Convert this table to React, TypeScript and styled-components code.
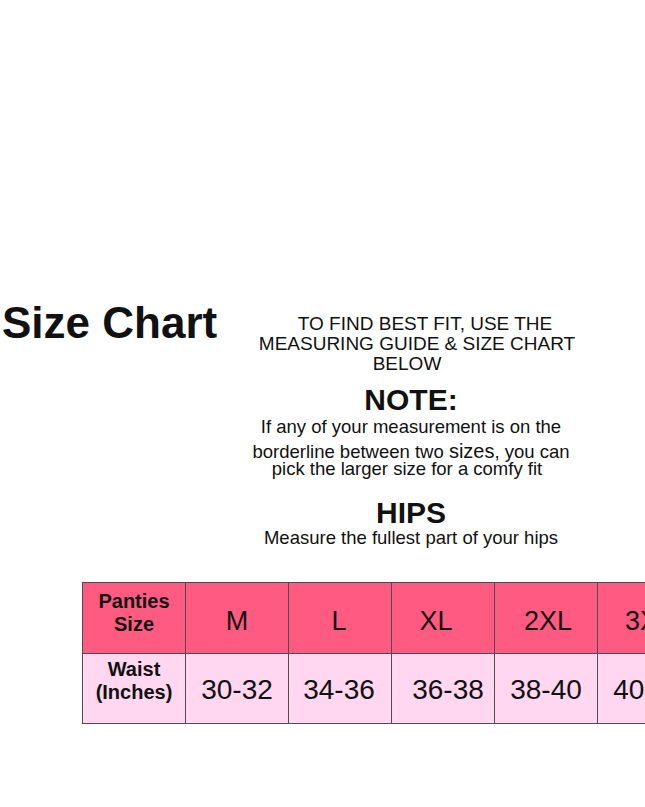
import React from 'react';
import styled, { createGlobalStyle } from 'styled-components';

const GlobalStyle = createGlobalStyle`
  html, body {
    margin: 0;
    padding: 0;
    background: #ffffff;
    overflow: hidden;
  }
  body {
    font-family: "Liberation Sans", Arial, sans-serif;
    color: #111111;
  }
`;

const Page = styled.div`
  width: 645px;
  height: 807px;
  padding-top: 301px;
  box-sizing: border-box;
  overflow: hidden;
`;

const Hero = styled.div`
  display: grid;
  grid-template-columns: 246px 330px;
  align-items: start;
`;

const Title = styled.h1`
  margin: 0;
  padding-left: 2px;
  font-size: 44px;
  line-height: 44px;
  font-weight: 700;
  white-space: nowrap;
`;

const Notes = styled.div`
  display: flex;
  flex-direction: column;
  align-items: center;
  padding-top: 13px;
`;

const Caps = styled.div<{ $nudge?: number }>`
  font-size: 19px;
  line-height: 20px;
  white-space: nowrap;
  margin-left: ${p => (p.$nudge ?? 0) * 2}px;
`;

const Heading = styled.div<{ $gap: number }>`
  margin-top: ${p => p.$gap}px;
  font-size: 30px;
  line-height: 30px;
  font-weight: 700;
  white-space: nowrap;
`;

const Body = styled.div<{ $gap?: number; $nudge?: number }>`
  margin-top: ${p => p.$gap ?? 0}px;
  margin-left: ${p => (p.$nudge ?? 0) * 2}px;
  font-size: 18.5px;
  line-height: 20px;
  white-space: nowrap;
`;

const Big = styled.span`
  font-size: 20px;
`;

const TableWrap = styled.div`
  margin-top: 34px;
  padding-left: 82px;
  overflow: hidden;
`;

const Grid = styled.div`
  display: grid;
  grid-template-columns: repeat(6, 103px);
  grid-template-rows: 71px 70px;
  width: max-content;
  border-top: 1px solid #4d4d4d;
  border-left: 1px solid #4d4d4d;
`;

const Cell = styled.div<{ $head?: boolean }>`
  display: flex;
  align-items: center;
  justify-content: center;
  text-align: center;
  background: ${p => (p.$head ? '#ff5b82' : '#ffd7f0')};
  border-right: 1px solid #4d4d4d;
  border-bottom: 1px solid #4d4d4d;
  color: #111111;
`;

const Label = styled.span<{ $lift: number }>`
  font-size: 20px;
  line-height: 23px;
  font-weight: 700;
  margin-top: ${p => -p.$lift * 2}px;
`;

const Size = styled.span<{ $nudge?: number }>`
  font-size: 27px;
  margin-left: ${p => (p.$nudge ?? 0) * 2}px;
  margin-top: 6px;
`;

const Value = styled.span<{ $nudge?: number }>`
  font-size: 28px;
  margin-left: ${p => (p.$nudge ?? 0) * 2}px;
  margin-top: 2px;
`;

const sizes = [
  { name: 'M', waist: '30-32', n: 0, v: 0 },
  { name: 'L', waist: '34-36', n: -1, v: -1 },
  { name: 'XL', waist: '36-38', n: -7, v: 5 },
  { name: '2XL', waist: '38-40', n: 2, v: 0 },
  { name: '3XL', waist: '40-42', n: 0, v: 0 },
];

export default function App() {
  return (
    <Page>
      <GlobalStyle />
      <Hero>
        <Title>Size Chart</Title>
        <Notes>
          <Caps $nudge={14}>TO FIND BEST FIT, USE THE</Caps>
          <Caps $nudge={6}>MEASURING GUIDE &amp; SIZE CHART</Caps>
          <Caps $nudge={-4}>BELOW</Caps>
          <Heading $gap={11}>NOTE:</Heading>
          <Body $gap={2}>If any of your measurement is on the</Body>
          <Body $gap={4}>
            borderline between two <Big>sizes</Big>, you can
          </Body>
          <Body $gap={-3} $nudge={-4}>pick the larger size for a comfy fit</Body>
          <Heading $gap={19}>HIPS</Heading>
          <Body>Measure the fullest part of your hips</Body>
        </Notes>
      </Hero>
      <TableWrap>
        <Grid>
          <Cell $head>
            <Label $lift={5}>Panties<br />Size</Label>
          </Cell>
          {sizes.map(s => (
            <Cell $head key={s.name}>
              <Size $nudge={s.n}>{s.name}</Size>
            </Cell>
          ))}
          <Cell>
            <Label $lift={8}>Waist<br />(Inches)</Label>
          </Cell>
          {sizes.map(s => (
            <Cell key={s.waist}>
              <Value $nudge={s.v}>{s.waist}</Value>
            </Cell>
          ))}
        </Grid>
      </TableWrap>
    </Page>
  );
}
